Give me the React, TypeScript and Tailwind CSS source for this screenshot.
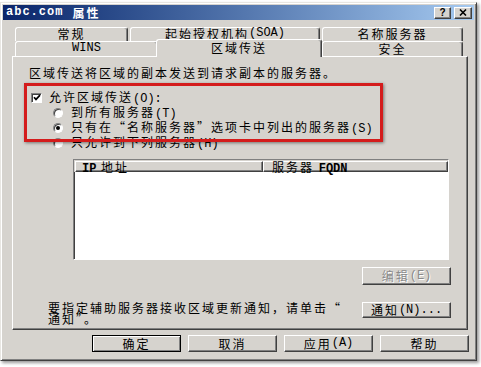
const lat = "font-['Liberation_Mono',monospace] tracking-normal";

const raised =
  "border border-t-white border-l-white border-r-[#404040] border-b-[#404040] shadow-[inset_-1px_-1px_0_#808080]";
const sunken =
  "border border-t-[#808080] border-l-[#808080] border-r-white border-b-white shadow-[inset_1px_1px_0_#404040]";
const tabCls =
  "flex justify-center rounded-t-[3px] border-t border-l border-r border-t-white border-l-white border-r-[#404040] shadow-[inset_-1px_0_0_#808080] bg-[#d6d3ce]";

function Radio({ checked }: { checked?: boolean }) {
  return (
    <span
      className={`flex h-[10px] w-[10px] items-center justify-center rounded-full bg-white ${sunken}`}
    >
      {checked ? <span className="h-[4px] w-[4px] rounded-full bg-black" /> : null}
    </span>
  );
}

function Checkbox() {
  return (
    <span className={`flex h-[10px] w-[11px] items-center justify-center bg-white ${sunken}`}>
      <svg width="8" height="7" viewBox="0 0 8 7">
        <path d="M1 3.2 L3 5.4 L7 1.2" fill="none" stroke="#000" strokeWidth="1.7" />
      </svg>
    </span>
  );
}

export default function App() {
  return (
    <div className="h-[367px] w-[481px] bg-white pt-[2px] font-['Noto_Sans_CJK_SC',sans-serif] text-[12px] tracking-[2px] text-black">
      <div className="flex h-[359px] w-[477px] flex-col border border-t-[#e8e6e2] border-l-[#e8e6e2] border-r-[#404040] border-b-[#404040] bg-[#d6d3ce] p-[2px] shadow-[inset_1px_1px_0_white,inset_-1px_-1px_0_#808080,2px_2px_3px_rgba(0,0,0,0.4)]">
        {/* Title bar */}
        <div className="flex h-[15px] items-center bg-linear-to-r from-[#0a246a] to-[#a6caf0] pr-[2px] pl-[3px] leading-[15px] font-bold text-white">
          <span className="font-['Liberation_Mono',monospace] text-[12px] tracking-[1px]">abc.com</span>
          <span className="ml-[9px]">属性</span>
          <div className="ml-auto flex gap-[3px]">
            <span
              className={`flex h-[12px] w-[17px] items-center justify-center bg-[#d6d3ce] font-['Liberation_Sans',sans-serif] text-[10px] leading-none tracking-normal text-black ${raised}`}
            >
              ?
            </span>
            <span className={`flex h-[12px] w-[18px] items-center justify-center bg-[#d6d3ce] ${raised}`}>
              <svg width="8" height="7" viewBox="0 0 8 7">
                <path d="M1 0.5 L7 6.5 M7 0.5 L1 6.5" stroke="#000" strokeWidth="1.6" />
              </svg>
            </span>
          </div>
        </div>

        {/* Tabs */}
        <div className="mt-[7px] ml-[12px]">
          <div className="flex h-[14px] gap-[2px] leading-[11px]">
            <div className={`${tabCls} w-[113px]`}>常规</div>
            <div className={`${tabCls} w-[190px]`}>
              起始授权机构<span className={lat}>(SOA)</span>
            </div>
            <div className={`${tabCls} w-[141px]`}>名称服务器</div>
          </div>
          <div className="flex h-[15px] items-start leading-[13px]">
            <div className={`${tabCls} h-[15px] w-[143px]`}>
              <span className={lat}>WINS</span>
            </div>
            <div className={`${tabCls} relative z-10 -mx-[2px] -mt-[2px] h-[18px] w-[166px] pt-[1px]`}>
              区域传送
            </div>
            <div className={`${tabCls} ml-[2px] h-[15px] w-[141px]`}>安全</div>
          </div>
        </div>

        {/* Panel */}
        <div className={`relative ml-[9px] flex h-[274px] w-[456px] flex-col ${raised}`}>
          <p className="mt-[8px] ml-[16px] leading-[16px]">区域传送将区域的副本发送到请求副本的服务器。</p>

          <div className="mt-[9px] ml-[18px] flex h-[15px] items-center leading-[15px]">
            <Checkbox />
            <span className="ml-[7px]">
              允许区域传送<span className={lat}>(O):</span>
            </span>
          </div>
          <div className="ml-[40px] flex h-[15px] items-center leading-[15px]">
            <Radio />
            <span className="ml-[8px]">
              到所有服务器<span className={lat}>(T)</span>
            </span>
          </div>
          <div className="ml-[40px] flex h-[15px] items-center leading-[15px]">
            <Radio checked />
            <span className="ml-[8px]">
              只有在“名称服务器”选项卡中列出的服务器<span className={lat}>(S)</span>
            </span>
          </div>
          <div className="ml-[40px] flex h-[15px] items-center leading-[15px]">
            <Radio />
            <span className="ml-[8px]">
              只允许到下列服务器<span className={lat}>(H)</span>
            </span>
          </div>

          {/* list */}
          <div className={`mt-[9px] ml-[60px] h-[101px] w-[376px] bg-white ${sunken}`}>
            <div className="flex h-[12px] bg-[#d6d3ce] pt-px pl-px leading-[10px]">
              <div className={`w-[188px] pl-[6px] ${raised}`}>
                <span className={`${lat} font-bold`}>IP</span> 地址
              </div>
              <div className={`flex-1 pl-[8px] ${raised}`}>
                服务器 <span className={`${lat} font-bold`}>FQDN</span>
              </div>
            </div>
          </div>

          <div
            className={`mt-[7px] mr-[16px] flex h-[18px] w-[89px] items-center justify-center self-end leading-[16px] text-[#8a8a8a] [text-shadow:1px_1px_0_#fff] ${raised}`}
          >
            编辑<span className={lat}>(E)</span>
          </div>

          <div className="mt-[17px] flex items-start">
            <p className="ml-[35px] leading-[11px]">
              要指定辅助服务器接收区域更新通知，请单击“
              <br />
              通知”。
            </p>
            <div
              className={`mr-[16px] ml-auto flex h-[16px] w-[89px] items-center justify-center leading-[14px] ${raised}`}
            >
              通知<span className={lat}>(N)...</span>
            </div>
          </div>

          {/* annotation box */}
          <div className="absolute top-[26px] left-[11px] h-[59px] w-[359px] border-[3px] border-[#d41c1c] shadow-[1px_1px_3px_rgba(0,0,0,0.45)]" />
        </div>

        {/* Dialog buttons */}
        <div className="mt-[5px] flex justify-end gap-[7px] pr-[5px] leading-[15px]">
          <div className="flex h-[17px] w-[89px] items-center justify-center border border-black shadow-[inset_1px_1px_0_white,inset_-1px_-1px_0_#808080]">
            确定
          </div>
          <div className={`flex h-[17px] w-[89px] items-center justify-center ${raised}`}>取消</div>
          <div className={`flex h-[17px] w-[89px] items-center justify-center ${raised}`}>
            应用<span className={lat}>(A)</span>
          </div>
          <div className={`flex h-[17px] w-[89px] items-center justify-center ${raised}`}>帮助</div>
        </div>
      </div>
    </div>
  );
}
